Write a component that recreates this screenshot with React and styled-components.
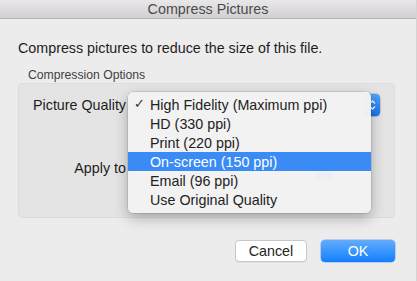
import React from "react";
import styled, { createGlobalStyle } from "styled-components";

const Global = createGlobalStyle`
    html, body {
        margin: 0;
        padding: 0;
        background: #ececec;
    }
    body {
        font-family: "Liberation Sans", Arial, sans-serif;
        font-size: 14.3px;
        color: #1d1d1d;
    }
`;

const Window = styled.div`
    width: 417px;
    height: 281px;
    display: flex;
    flex-direction: column;
    background: #ececec;
    box-sizing: border-box;
    border-right: 1px solid #d4d4d4;
    overflow: hidden;
`;

const TitleBar = styled.div`
    height: 18px;
    flex: none;
    display: flex;
    align-items: center;
    justify-content: center;
    background: linear-gradient(#e9e7e9, #d2d0d2);
    border-bottom: 1px solid #b3b3b3;
    color: #4b4b4b;
    font-size: 14.3px;
`;

const Body = styled.div`
    padding: 21px 21px 0 18px;
    display: flex;
    flex-direction: column;
`;

const Intro = styled.div`
    line-height: 16px;
    margin-bottom: 13px;
`;

const GroupLabel = styled.div`
    font-size: 12.2px;
    color: #3f3f3f;
    line-height: 13px;
    margin-left: 10px;
    margin-bottom: 1px;
`;

const Group = styled.div`
    position: relative;
    height: 135px;
    box-sizing: border-box;
    border: 1px solid #dcdcdc;
    border-radius: 4px;
    background: #e4e4e4;
    display: grid;
    grid-template-columns: 107px 248px;
    grid-auto-rows: 22px;
    column-gap: 6px;
    row-gap: 41px;
    align-content: start;
    padding-top: 10px;
`;

const Label = styled.div`
    display: flex;
    align-items: center;
    justify-content: flex-end;
`;

const Popup = styled.div`
    width: ${p => p.width || 248}px;
    height: 22px;
    box-sizing: border-box;
    display: flex;
    border-radius: 4px;
    background: #fff;
    box-shadow: 0 0 0 0.5px rgba(0, 0, 0, 0.25), 0 1px 1px rgba(0, 0, 0, 0.1);
    overflow: hidden;
`;

const PopupText = styled.div`
    flex: 1;
`;

const PopupCap = styled.div`
    width: 16px;
    background: linear-gradient(#4ea2fb, #1a72f2);
    display: flex;
    align-items: center;
    justify-content: center;
`;

const Menu = styled.div`
    position: absolute;
    left: 109px;
    top: 8px;
    width: 243px;
    padding: 3px 0 4px;
    box-sizing: border-box;
    background: rgba(242, 242, 242, 0.98);
    border-radius: 5px;
    box-shadow: 0 0 0 0.5px rgba(0, 0, 0, 0.18), 0 5px 14px rgba(0, 0, 0, 0.28);
`;

const Item = styled.div`
    height: 19px;
    display: flex;
    align-items: center;
    padding-left: 22px;
    position: relative;
    white-space: nowrap;
    background: ${p => (p.active ? "#3b8bf6" : "transparent")};
    color: ${p => (p.active ? "#fff" : "#222")};
`;

const Check = styled.span`
    position: absolute;
    left: 6px;
    top: 1px;
    font-family: "DejaVu Sans", sans-serif;
    font-size: 13px;
    font-weight: bold;
    color: #333;
`;

const Buttons = styled.div`
    display: flex;
    justify-content: flex-end;
    gap: 14px;
    margin-top: 22px;
`;

const Button = styled.button`
    font-family: inherit;
    font-size: 14.3px;
    height: 22px;
    width: ${p => p.width}px;
    border-radius: 4px;
    padding: 0;
    cursor: pointer;
    border: ${p => (p.primary ? "none" : "1px solid #c8c8c8")};
    background: ${p =>
        p.primary ? "linear-gradient(#63acfc, #1380fe)" : "#fff"};
    color: ${p => (p.primary ? "#fff" : "#222")};
    box-shadow: ${p =>
        p.primary ? "0 0 0 0.5px rgba(0,80,200,0.4)" : "0 1px 0 rgba(0,0,0,0.05)"};
`;

const Chevrons = () => (
    <svg width="7" height="12" viewBox="0 0 7 12">
        <path d="M1 4.5 L3.5 2 L6 4.5 M1 7.5 L3.5 10 L6 7.5" fill="none" stroke="#fff" strokeWidth="1.3" />
    </svg>
);

const options = [
    "High Fidelity (Maximum ppi)",
    "HD (330 ppi)",
    "Print (220 ppi)",
    "On-screen (150 ppi)",
    "Email (96 ppi)",
    "Use Original Quality"
];

export default function App() {
    return (
        <Window>
            <Global />
            <TitleBar>Compress Pictures</TitleBar>
            <Body>
                <Intro>Compress pictures to reduce the size of this file.</Intro>
                <GroupLabel>Compression Options</GroupLabel>
                <Group>
                    <Label>Picture Quality</Label>
                    <Popup>
                        <PopupText />
                        <PopupCap>
                            <Chevrons />
                        </PopupCap>
                    </Popup>
                    <Label>Apply to</Label>
                    <Popup width={200}>
                        <PopupText />
                        <PopupCap>
                            <Chevrons />
                        </PopupCap>
                    </Popup>
                    <Menu>
                        {options.map((o, i) => (
                            <Item key={o} active={i === 3}>
                                {i === 0 && <Check>✓</Check>}
                                {o}
                            </Item>
                        ))}
                    </Menu>
                </Group>
                <Buttons>
                    <Button width={72}>Cancel</Button>
                    <Button width={74} primary>OK</Button>
                </Buttons>
            </Body>
        </Window>
    );
}
